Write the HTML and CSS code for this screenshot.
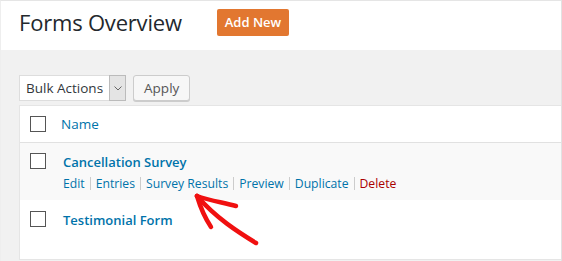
FILE: index.html
```html
<!DOCTYPE html>
<html lang="en">
<head>
  <meta charset="UTF-8" />
  <title>Forms Overview</title>
  <link rel="stylesheet" href="styles.css">
</head>
<body>
  <div class="page">
    <div class="header">
      <h1>Forms Overview</h1>
      <button class="add-btn">Add New</button>
    </div>

    <div class="content">
      <div class="toolbar">
        <div class="select">
          <span class="select-label">Bulk Actions</span>
          <span class="select-arrow">
            <svg width="8" height="5" viewBox="0 0 8 5"><path d="M0.5 0.5 L4 4 L7.5 0.5" fill="none" stroke="#666" stroke-width="1"/></svg>
          </span>
        </div>
        <button class="apply-btn">Apply</button>
      </div>

      <div class="table">
        <div class="row head">
          <span class="check"></span>
          <a class="col-name">Name</a>
        </div>

        <div class="row alt">
          <span class="check"></span>
          <div class="cell">
            <a class="title">Cancellation Survey</a>
            <div class="actions">
              <a>Edit</a><span class="sep"></span><a>Entries</a><span class="sep"></span><a>Survey Results</a><span class="sep"></span><a>Preview</a><span class="sep"></span><a>Duplicate</a><span class="sep"></span><a class="delete">Delete</a>
            </div>
          </div>
        </div>

        <div class="row last">
          <span class="check"></span>
          <div class="cell">
            <a class="title">Testimonial Form</a>
          </div>
        </div>
      </div>
    </div>

    <svg class="arrow" width="80" height="70" viewBox="0 0 80 70">
      <path d="M11 6 C 30 28, 52 42, 70 53" fill="none" stroke="#f01010" stroke-width="4.5" stroke-linecap="round"/>
      <path d="M11 6 C 22 10, 34 12, 50 16" fill="none" stroke="#f01010" stroke-width="4.5" stroke-linecap="round"/>
      <path d="M11 6 C 14 16, 19 28, 25 37" fill="none" stroke="#f01010" stroke-width="4.5" stroke-linecap="round"/>
    </svg>
  </div>
</body>
</html>
```

FILE: styles.css
```css
body {
  margin: 0;
  font-family: "Open Sans", "Noto Sans", Arial, sans-serif;
  color: #23282d;
}
.page {
  position: relative;
  width: 562px;
  height: 261px;
  box-sizing: border-box;
  border-top: 1px solid #e5e5e5;
  border-left: 1px solid #eeeeee;
  border-right: 1px solid #e2e2e2;
  background: #f1f1f1;
  overflow: hidden;
}
.header {
  display: flex;
  align-items: center;
  height: 49px;
  padding-left: 18px;
  padding-bottom: 8px;
  box-sizing: border-box;
  background: #fff;
}
h1 {
  margin: 0;
  font-size: 22px;
  font-weight: 400;
  letter-spacing: -0.2px;
  color: #23282d;
}
.add-btn {
  margin-left: 35px;
  height: 27px;
  padding: 0 8px;
  border: none;
  border-radius: 2px;
  background: #e27730;
  color: #fff;
  font-family: inherit;
  font-size: 13px;
  font-weight: 600;
  margin-top: 1px;
}
.content {
  padding: 25px 0 0 18px;
}
.toolbar {
  display: flex;
  gap: 7px;
  height: 26px;
}
.select {
  display: flex;
  border: 1px solid #ddd;
  background: #fff;
  box-sizing: border-box;
  height: 26px;
}
.select-label {
  padding: 0 6px 0 6px;
  font-size: 13.5px;
  line-height: 24px;
  color: #32373c;
}
.select-arrow {
  display: flex;
  align-items: center;
  justify-content: center;
  width: 17px;
  background: #e4e4e4;
  border: 1px solid #bbb;
  box-sizing: border-box;
  margin: -1px -1px -1px 0;
}
.apply-btn {
  height: 26px;
  padding: 0 10px;
  border: 1px solid #ccc;
  border-radius: 3px;
  background: #f7f7f7;
  box-shadow: 0 1px 0 #ccc;
  font-family: inherit;
  font-size: 13.5px;
  color: #555;
}
.table {
  margin-top: 4px;
  background: #fff;
  border: 1px solid #e5e5e5;
  border-right: none;
}
.row {
  display: flex;
  align-items: flex-start;
  padding-left: 10px;
}
.row.head {
  height: 36px;
  align-items: center;
  border-bottom: 1px solid #e1e1e1;
}
.row.alt {
  height: 57px;
  background: #f9f9f9;
}
.row.last {
  height: 59px;
}
.check {
  width: 16px;
  height: 16px;
  box-sizing: border-box;
  border: 1px solid #555;
  background: #fff;
  flex: none;
}
.row.alt .check {
  margin-top: 10px;
}
.row.last .check {
  margin-top: 11px;
}
.col-name {
  margin-left: 15px;
  font-size: 13.5px;
  color: #0073aa;
}
.cell {
  margin-left: 17px;
}
.title {
  display: block;
  margin-top: 10px;
  font-size: 13px;
  font-weight: 600;
  color: #0073aa;
}
.actions {
  display: flex;
  align-items: center;
  margin-top: 4px;
  font-size: 12.2px;
  color: #0073aa;
}
.actions .sep {
  width: 1px;
  height: 13px;
  background: #ccc;
  margin: 0 5px;
}
.actions .delete {
  color: #a00;
}
.row.last .title {
  margin-top: 11px;
}
.arrow {
  position: absolute;
  left: 185px;
  top: 189px;
}
```
